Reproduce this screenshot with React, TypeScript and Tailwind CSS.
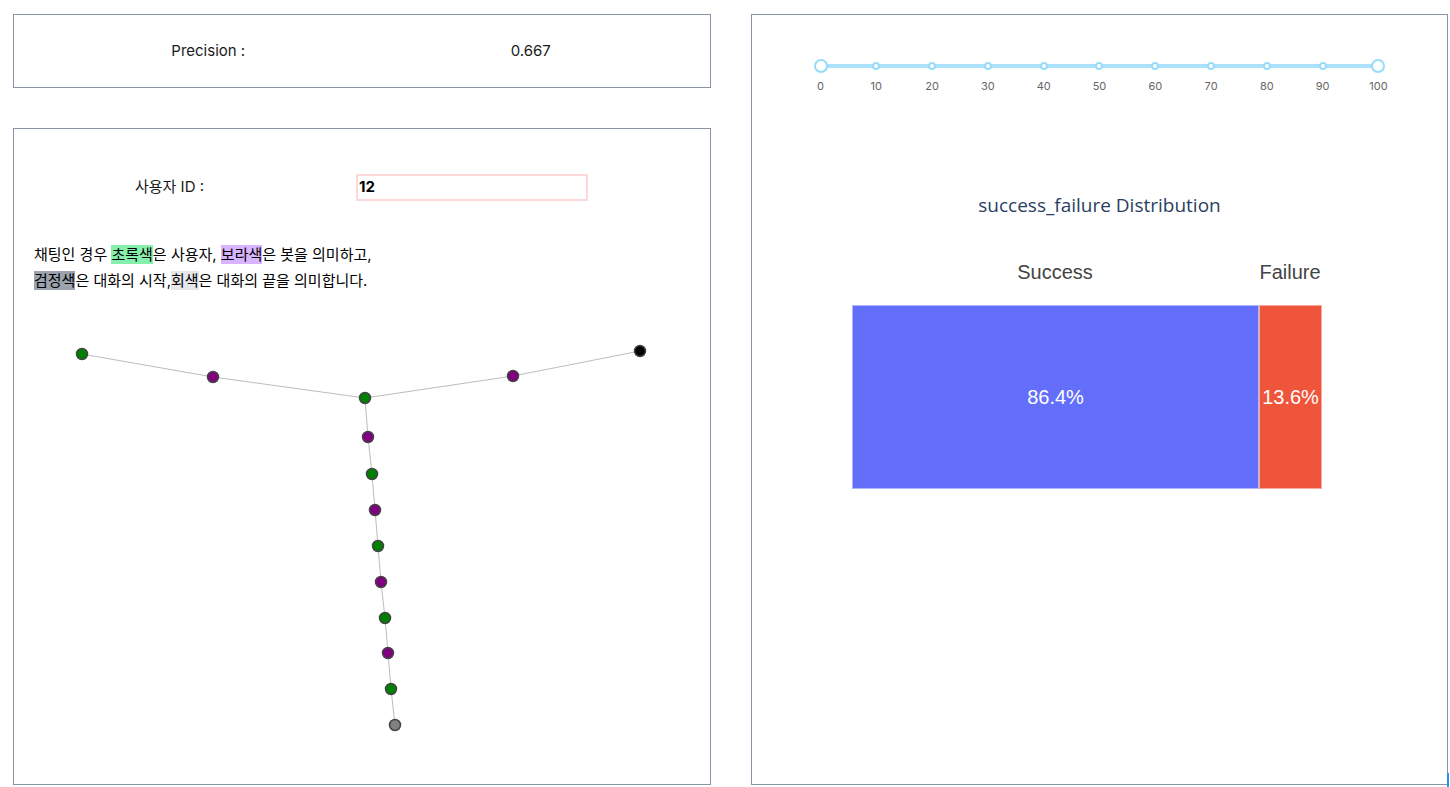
const nodes: { x: number; y: number; c: string }[] = [
  { x: 68, y: 54, c: '#008000' },
  { x: 199, y: 77, c: '#800080' },
  { x: 351, y: 98, c: '#008000' },
  { x: 499, y: 76, c: '#800080' },
  { x: 626, y: 51, c: '#000000' },
  { x: 354, y: 137, c: '#800080' },
  { x: 358, y: 174, c: '#008000' },
  { x: 361, y: 210, c: '#800080' },
  { x: 364, y: 246, c: '#008000' },
  { x: 367, y: 282, c: '#800080' },
  { x: 371, y: 318, c: '#008000' },
  { x: 374, y: 353, c: '#800080' },
  { x: 377, y: 389, c: '#008000' },
  { x: 381, y: 425, c: '#808080' },
];

const edges: [number, number][] = [
  [0, 1], [1, 2], [2, 3], [3, 4], [2, 5], [5, 6], [6, 7], [7, 8], [8, 9], [9, 10], [10, 11], [11, 12], [12, 13],
];

const marks = [0, 10, 20, 30, 40, 50, 60, 70, 80, 90, 100];

function ChatGraph() {
  return (
    <svg width="696" height="440" className="block mt-[6px]">
      {edges.map(([a, b], i) => (
        <line key={i} x1={nodes[a].x} y1={nodes[a].y} x2={nodes[b].x} y2={nodes[b].y} stroke="#bdbdbd" strokeWidth="1" />
      ))}
      {nodes.map((n, i) => (
        <circle key={i} cx={n.x} cy={n.y} r="5.5" fill={n.c} stroke="#444" strokeWidth="1.5" />
      ))}
    </svg>
  );
}

function RangeSlider() {
  return (
    <div className="relative mx-auto w-[558px]">
      <div className="absolute left-0 right-0 top-[8px] h-[4px] bg-[#abe2fb] rounded" />
      <div className="relative flex justify-between">
        {marks.map((m, i) => {
          const end = i === 0 || i === marks.length - 1;
          return (
            <div key={m} className="w-0 flex flex-col items-center">
              <div className="h-[20px] flex items-center">
                <div
                  className={
                    end
                      ? 'w-[14px] h-[14px] shrink-0 rounded-full bg-white border-2 border-[#96dbfa]'
                      : 'w-[8px] h-[8px] shrink-0 rounded-full bg-white border-2 border-[#96dbfa]'
                  }
                />
              </div>
              <span className="mt-[3px] text-[11px] leading-[14px] text-[#666] whitespace-nowrap">{m}</span>
            </div>
          );
        })}
      </div>
    </div>
  );
}

function Distribution() {
  return (
    <div>
      <div className="text-center font-['Open_Sans',sans-serif] text-[19px] text-[#2a3f5f] leading-[24px]">
        success_failure Distribution
      </div>
      <div className="ml-[100px] w-[470px] mt-[43px] font-['Liberation_Sans',Arial,sans-serif]">
        <div className="flex text-[20px] text-[#444] leading-[24px]">
          <div className="w-[406px] text-center">Success</div>
          <div className="flex-1 text-center">Failure</div>
        </div>
        <div className="flex h-[184px] mt-[21px]">
          <div className="w-[407px] bg-[#636efa] border border-white/50 flex items-center justify-center text-white text-[20px]">
            86.4%
          </div>
          <div className="flex-1 bg-[#ef553b] border border-white/50 flex items-center justify-center text-white text-[20px]">
            13.6%
          </div>
        </div>
      </div>
    </div>
  );
}

export default function App() {
  return (
    <div className="relative w-[1450px] h-[787px] bg-white pt-[14px] pl-[13px] flex gap-[40px] font-['Inter','Noto_Sans_CJK_KR',sans-serif] text-[15px] text-[#1a1a1a]">
      <div className="w-[698px] flex flex-col">
        <div className="h-[74px] border border-[#8a94a6] grid grid-cols-2 items-center pl-[33px] pr-[18px]">
          <div className="text-center">Precision :</div>
          <div className="text-center">0.667</div>
        </div>
        <div className="mt-[40px] h-[657px] border border-[#8a94a6] flex flex-col">
          <div className="flex items-center mt-[45px]">
            <div className="w-[311px] text-center">사용자 ID :</div>
            <div className="ml-[31px] w-[232px] h-[27px] border-2 border-[#fdd8d8] flex items-center px-[1px] font-bold text-black">
              12
            </div>
          </div>
          <div className="mt-[41px] pl-[20px] leading-[26px] text-black">
            <div>
              채팅인 경우 <span className="bg-[#86efac]">초록색</span>은 사용자, <span className="bg-[#d8b4fe]">보라색</span>은 봇을 의미하고,
            </div>
            <div>
              <span className="bg-[#9ca3af]">검정색</span>은 대화의 시작,<span className="bg-[#e5e7eb]">회색</span>은 대화의 끝을 의미합니다.
            </div>
          </div>
          <ChatGraph />
        </div>
      </div>
      <div className="w-[697px] h-[771px] border border-[#8a94a6] pt-[41px]">
        <RangeSlider />
        <div className="mt-[100px]">
          <Distribution />
        </div>
      </div>
      <div className="absolute right-[1px] bottom-0 w-[2px] h-[14px] bg-[#2196f3]" />
    </div>
  );
}
